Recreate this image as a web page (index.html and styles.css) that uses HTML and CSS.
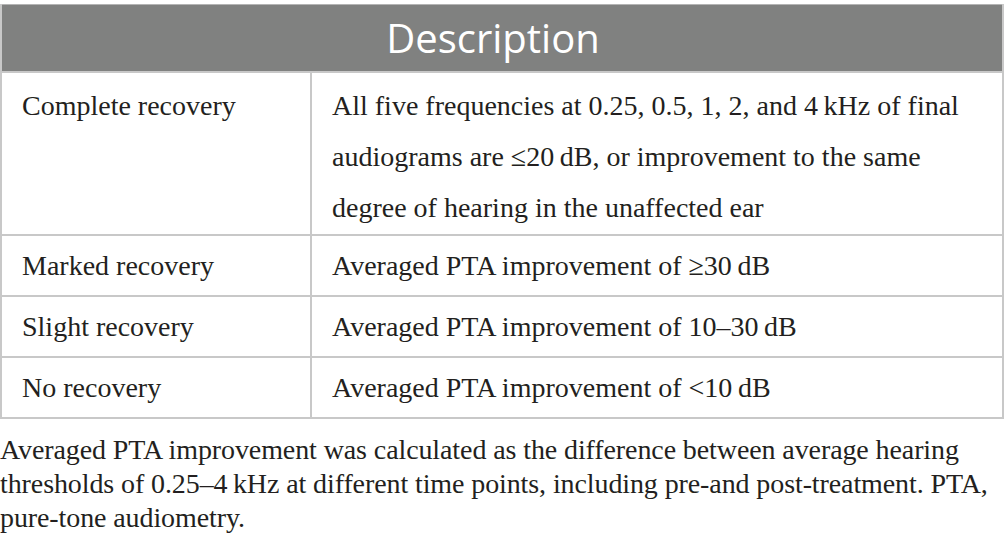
FILE: index.html
```html
<!DOCTYPE html>
<html lang="en">
<head>
  <meta charset="UTF-8">
  <title>Recovery criteria</title>
  <link rel="stylesheet" href="styles.css">
</head>
<body>
  <table class="criteria">
    <thead>
      <tr>
        <th colspan="2">Description</th>
      </tr>
    </thead>
    <tbody>
      <tr class="first">
        <td class="label">Complete recovery</td>
        <td>All five frequencies at 0.25, 0.5, 1, 2, and 4&#8201;kHz of final<br>audiograms are &le;20&#8201;dB, or improvement to the same<br>degree of hearing in the unaffected ear</td>
      </tr>
      <tr>
        <td class="label">Marked recovery</td>
        <td>Averaged PTA improvement of &ge;30&#8201;dB</td>
      </tr>
      <tr>
        <td class="label">Slight recovery</td>
        <td>Averaged PTA improvement of 10&ndash;30&#8201;dB</td>
      </tr>
      <tr>
        <td class="label">No recovery</td>
        <td>Averaged PTA improvement of &lt;10&#8201;dB</td>
      </tr>
    </tbody>
  </table>

  <p class="note">Averaged PTA improvement was calculated as the difference between average hearing<br>thresholds of 0.25&ndash;4&#8201;kHz at different time points, including pre-and post-treatment. PTA,<br>pure-tone audiometry.</p>
</body>
</html>
```

FILE: styles.css
```css
* {
  box-sizing: border-box;
}

body {
  margin: 0;
  background: #fff;
  color: #231f20;
  font-family: "Liberation Serif", "Times New Roman", serif;
}

.criteria {
  width: 1004px;
  margin-top: 4px;
  border-collapse: collapse;
  border-top: 1px solid #b4b4b4;
  border-left: 2px solid #c8c8c8;
  border-right: 2px solid #c8c8c8;
  border-bottom: 2px solid #c8c8c8;
}

.criteria th {
  height: 67px;
  background: #808180;
  color: #fff;
  font-family: "Open Sans", "Noto Sans", sans-serif;
  font-weight: 400;
  font-size: 40px;
  text-align: center;
  padding: 0 18px 0 0;
}

.criteria td {
  font-size: 28px;
  line-height: 51px;
  padding: 4px 20px;
  vertical-align: top;
  border-top: 2px solid #c8c8c8;
  white-space: nowrap;
}

.criteria .first td {
  padding-top: 7px;
  padding-bottom: 1px;
}

.criteria td.label {
  width: 310px;
  border-right: 2px solid #c8c8c8;
}

.note {
  margin: 14px 0 0;
  font-size: 28px;
  line-height: 34px;
  letter-spacing: -0.1px;
  white-space: nowrap;
}
```
